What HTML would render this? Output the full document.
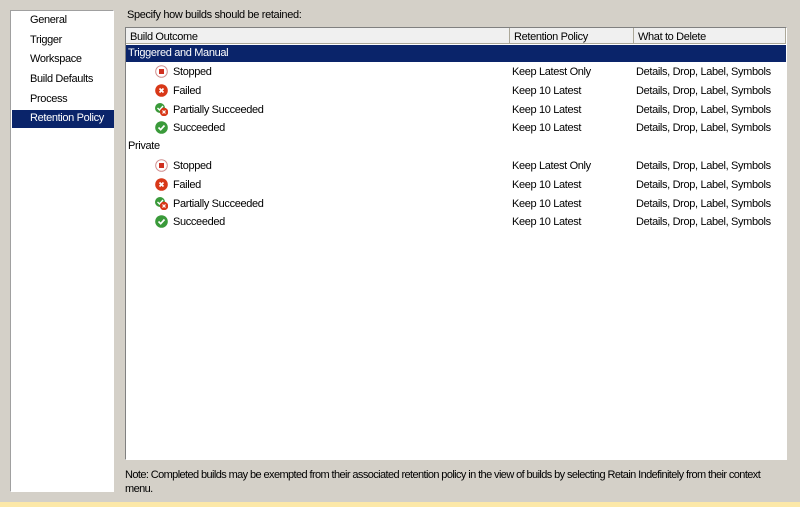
<!DOCTYPE html>
<html><head><style>
body{margin:0;width:800px;height:507px;background:#d4d0c8;font-family:"Liberation Sans",sans-serif;font-size:11px;letter-spacing:-0.35px;color:#000;position:relative;overflow:hidden}
.a{position:absolute;white-space:nowrap}
#nav{position:absolute;left:10px;top:10px;width:104px;height:482px;background:#fff;border:1px solid #a0a0a0;border-right-color:#fff;border-bottom-color:#fff;box-sizing:border-box}
.ni{position:absolute;left:19px}
#sel{position:absolute;left:1px;top:99px;width:102px;height:18px;background:#0a246a}
#tbl{position:absolute;left:125px;top:27px;width:662px;height:433px;background:#fff;border:1px solid #808080;border-right-color:#fff;border-bottom-color:#fff;box-sizing:border-box}
.hd{position:absolute;top:0;height:16px;border-right:1px solid #aca899;border-bottom:1px solid #aca899;box-sizing:border-box;padding:3px 0 0 4px;background:#f0f0f0}
#band{position:absolute;left:0;top:17px;width:660px;height:17px;background:#0a246a;color:#fff}
.ic{position:absolute;width:13px;height:13px}
</style></head><body>
<div id="nav">
<div id="sel"></div>
<div class="a ni" style="top:3px">General</div>
<div class="a ni" style="top:23px">Trigger</div>
<div class="a ni" style="top:42px">Workspace</div>
<div class="a ni" style="top:62px">Build Defaults</div>
<div class="a ni" style="top:82px">Process</div>
<div class="a ni" style="top:101px;color:#fff">Retention Policy</div>
</div>
<div class="a" style="left:127px;top:9px">Specify how builds should be retained:</div>
<div id="tbl">
<div class="hd" style="left:0;width:384px">Build Outcome</div>
<div class="hd" style="left:384px;width:124px">Retention Policy</div>
<div class="hd" style="left:508px;width:152px">What to Delete</div>
<div id="band"><div class="a" style="left:2px;top:2px">Triggered and Manual</div></div>
<div class="a" style="left:2px;top:112px">Private</div>
</div>
<div id="rows"></div>
<div class="a" style="left:125px;top:468px;line-height:14px;letter-spacing:-0.6px">Note: Completed builds may be exempted from their associated retention policy in the view of builds by selecting Retain Indefinitely from their context<br>menu.</div>
<div style="position:absolute;left:0;top:502px;width:800px;height:5px;background:#fce8a8"></div>
<svg width="0" height="0" style="position:absolute"><defs>
<g id="stop"><circle cx="6.5" cy="6.5" r="5.8" fill="#fff" stroke="#d09090"/><rect x="4" y="4" width="5" height="5" fill="#d03020"/></g>
<g id="fail"><circle cx="6.5" cy="6.5" r="6.3" fill="#d83818"/><path d="M4.5 4.5l4 4M8.5 4.5l-4 4" stroke="#fff" stroke-width="1.7"/></g>
<g id="ok"><circle cx="6.5" cy="6.5" r="6.3" fill="#3a9a3a"/><path d="M3.5 6.5l2.2 2.2L9.5 4.5" stroke="#fff" stroke-width="1.7" fill="none"/></g>
<g id="part"><circle cx="5" cy="5" r="5" fill="#3a9a3a"/><path d="M2.5 5l2 2L8 3" stroke="#fff" stroke-width="1.4" fill="none"/><circle cx="9" cy="9" r="4.2" fill="#d83818"/><path d="M7.5 7.5l3 3M10.5 7.5l-3 3" stroke="#fff" stroke-width="1.2"/></g>
</defs></svg>
<script>
var d=[["stop","Stopped","Keep Latest Only"],["fail","Failed","Keep 10 Latest"],["part","Partially Succeeded","Keep 10 Latest"],["ok","Succeeded","Keep 10 Latest"]];
var tops=[65,84,103,121,159,178,197,215],h="";
tops.forEach(function(t,i){var r=d[i%4];
h+='<svg class="ic" style="left:155px;top:'+t+'px" viewBox="0 0 13 13"><use href="#'+r[0]+'"/></svg>';
h+='<div class="a" style="left:173px;top:'+(t+1)+'px">'+r[1]+'</div>';
h+='<div class="a" style="left:512px;top:'+(t+1)+'px">'+r[2]+'</div>';
h+='<div class="a" style="left:636px;top:'+(t+1)+'px">Details, Drop, Label, Symbols</div>';});
document.getElementById('rows').innerHTML=h;
</script>
</body></html>
